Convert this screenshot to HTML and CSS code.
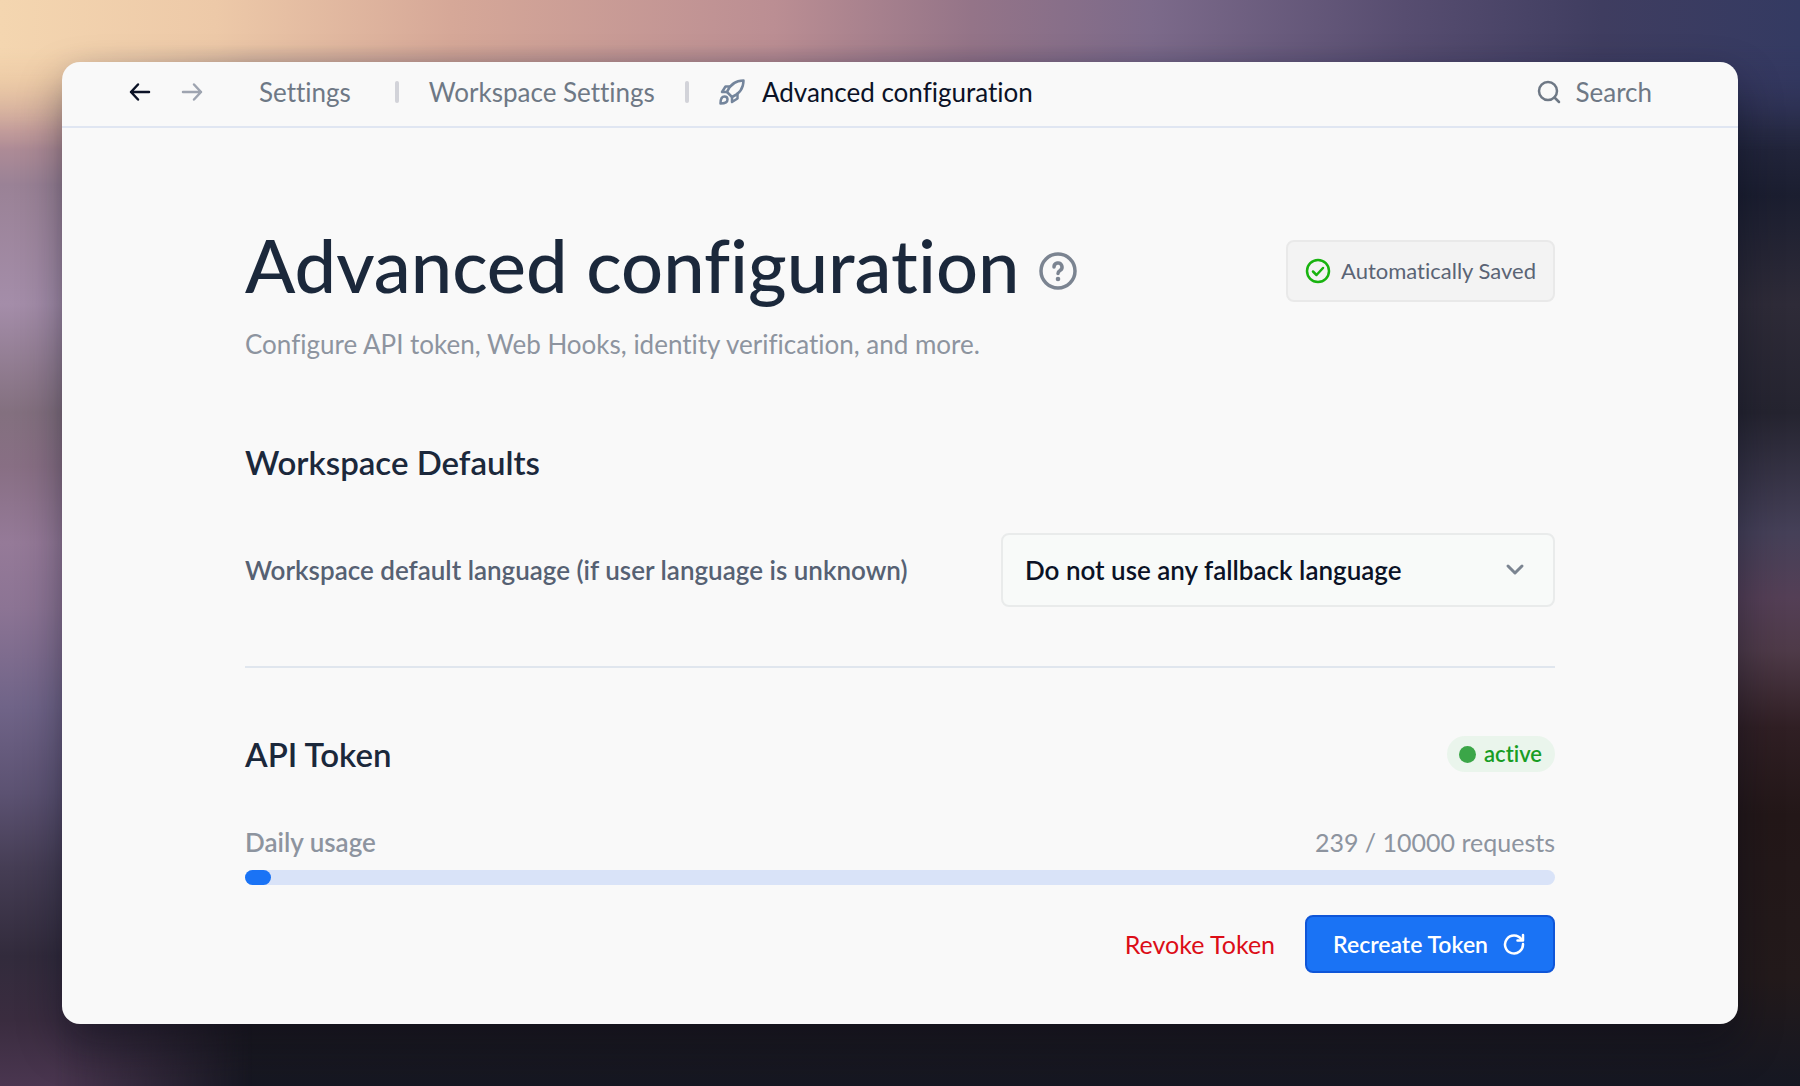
FILE: index.html
```
<!DOCTYPE html>
<html lang="en">
<head>
    <meta charset="UTF-8">
    <meta name="viewport" content="width=device-width, initial-scale=1.0">
    <title>Advanced configuration</title>
    <link rel="stylesheet" href="styles.css">
</head>
<body>
    <div class="window">
        <header class="topbar">
            <div class="history">
                <button type="button" class="icon-button" aria-label="Back">
                    <svg width="22" height="22" viewBox="0 0 22 22"><path d="M20 11H2M9 3.500L2 11l7 7.500"/></svg>
                </button>
                <button type="button" class="icon-button forward" aria-label="Forward">
                    <svg width="22" height="22" viewBox="0 0 22 22"><path d="M2 11h18M13 3.500L20 11l-7 7.500"/></svg>
                </button>
            </div>
            <nav class="breadcrumbs">
                <a href="#" class="crumb-root">Settings</a>
                <span class="divider"></span>
                <a href="#">Workspace Settings</a>
                <span class="divider"></span>
                <a href="#" class="current">
                    <svg width="26" height="26" viewBox="0 0 26 26">
                        <path d="M8 13C11 6 16 1.500 24.500 1.500C24.500 9.500 20 15 13 18Z"/>
                        <path d="M11 7.500H6.500L3 13H8M18.500 14.500V19.500L13 23V18"/>
                        <path d="M1.500 24.500C1.500 20.500 2.500 17.500 5.500 17.500C7.500 17.500 8.500 18.500 8.500 20.500C8.500 23.500 5.500 24.500 1.500 24.500Z"/>
                    </svg>
                    Advanced configuration
                </a>
            </nav>
            <button type="button" class="search">
                <svg width="24" height="24" viewBox="0 0 24 24"><circle cx="11" cy="11" r="9"/><path d="M17.500 17.500L22 22"/></svg>
                Search
            </button>
        </header>

        <main class="content">
            <div class="page-head">
                <div class="title-row">
                    <h1>Advanced configuration</h1>
                    <button type="button" class="icon-button help" aria-label="Help">
                        <svg width="38" height="38" viewBox="0 0 38 38"><circle cx="19" cy="19" r="17"/><path d="M15 15a4 4 0 1 1 6 3.400c-1.500 .9-2 1.600-2 3"/><circle class="dot" cx="19" cy="27" r="2.300"/></svg>
                    </button>
                </div>
                <div class="saved">
                    <svg width="26" height="26" viewBox="0 0 26 26"><circle cx="13" cy="13" r="11"/><path d="M8 13.500l3.500 3.500L18 10"/></svg>
                    Automatically Saved
                </div>
            </div>
            <p class="subtitle">Configure API token, Web Hooks, identity verification, and more.</p>

            <section class="defaults">
                <h2>Workspace Defaults</h2>
                <div class="field">
                    <label for="language">Workspace default language (if user language is unknown)</label>
                    <div class="select-box">
                        <select id="language">
                            <option>Do not use any fallback language</option>
                        </select>
                        <svg width="20" height="14" viewBox="0 0 20 14"><path d="M3 3l7 7 7-7"/></svg>
                    </div>
                </div>
            </section>

            <section class="token">
                <div class="section-head">
                    <h2>API Token</h2>
                    <span class="status">active</span>
                </div>
                <div class="usage">
                    <span class="usage-label" id="usageLabel">Daily usage</span>
                    <span class="usage-count">239 / 10000 requests</span>
                </div>
                <div class="bar" role="progressbar" aria-labelledby="usageLabel" aria-valuenow="239" aria-valuemax="10000">
                    <div class="bar-fill" style="width: 2%;"></div>
                </div>
                <div class="actions">
                    <button type="button" class="revoke">Revoke Token</button>
                    <button type="button" class="recreate">
                        Recreate Token
                        <svg width="22" height="22" viewBox="0 0 22 22"><path d="M18.500 6.500A9 9 0 1 0 20 11"/><path d="M20 2v5.500h-5.500"/></svg>
                    </button>
                </div>
            </section>
        </main>
    </div>
</body>
</html>
```

FILE: styles.css
```
* {
    box-sizing: border-box;
}

body {
    position: relative;
    margin: 0;
    padding: 62px;
    min-height: 100vh;
    font-family: Lato, "Liberation Sans", sans-serif;
    font-size: 26px;
    font-variant-ligatures: none;
    line-height: 32px;
    color: #1b283b;
    background: linear-gradient(to bottom, #343a62 0%, #30325a 7%, #24273f 12%, #1b1e30 18%, #2e2b38 28%, #252430 38%, #454058 49%, #543f56 55%, #4e3a48 60%, #301f24 67%, #231718 75%, #231a1b 90%, #151722 100%);
}

/* wallpaper: left side and top edge, faded into the body gradient */
body::before,
body::after {
    content: "";
    position: absolute;
    top: 0;
    left: 0;
    right: 0;
    z-index: -1;
}

body::before {
    bottom: 0;
    background: linear-gradient(to bottom, #f2d5b0 0%, #e0b896 7%, #b89096 12%, #9a8296 17%, #a48da9 28%, #83707f 38%, #886f84 43%, #957a98 50%, #8c7494 56%, #706488 65%, #5c5272 73%, #453d54 80%, #322b3c 88%, #3a2c3f 94%, #4a3650 100%);
    -webkit-mask-image: linear-gradient(to right, #000 3%, transparent 14%);
    mask-image: linear-gradient(to right, #000 3%, transparent 14%);
}

body::after {
    height: 150px;
    background: linear-gradient(to right, #f4d6b0 0%, #edc9a8 12%, #d6a898 25%, #bb8e93 43%, #947488 54%, #7c6a8a 64%, #574d70 78%, #3f3d60 89%, #343a62 100%);
    -webkit-mask-image: linear-gradient(to bottom, #000 30%, transparent 100%);
    mask-image: linear-gradient(to bottom, #000 30%, transparent 100%);
}

h1, h2, p {
    margin: 0;
}

a {
    color: inherit;
    text-decoration: none;
}

button {
    padding: 0;
    font: inherit;
    color: inherit;
    background: none;
    border: none;
    cursor: pointer;
}

svg {
    display: block;
    flex: none;
    fill: none;
    stroke: currentColor;
    stroke-width: 2.500;
    stroke-linecap: round;
    stroke-linejoin: round;
}

.window {
    min-height: calc(100vh - 124px);
    background-color: #f9f9f9;
    border-radius: 18px;
    box-shadow: 0 20px 44px rgba(6, 10, 24, 0.4);
}

/* top bar */
.topbar {
    display: flex;
    align-items: center;
    height: 66px;
    padding: 0 86px 4px 67px;
    color: #6e7885;
    border-bottom: 2px solid #e0e6f2;
}

.history {
    display: flex;
    gap: 30px;
    margin-right: 56px;
    color: #0b1226;
}

.forward {
    color: #9ea4b0;
}

.breadcrumbs {
    display: flex;
    align-items: center;
    gap: 30px;
    margin-right: auto;
}

.crumb-root {
    margin-right: 14px;
}

.divider {
    width: 4px;
    height: 22px;
    border-radius: 2px;
    background-color: #d2d3d9;
}

.current {
    display: flex;
    align-items: center;
    gap: 17px;
    color: #0b1226;
}

.current svg {
    color: #74859c;
}

.search {
    display: flex;
    align-items: center;
    gap: 14px;
}

/* page */
.content {
    padding: 96px 183px 50px;
}

.page-head,
.field,
.section-head,
.usage {
    display: flex;
    align-items: center;
    justify-content: space-between;
}

.title-row {
    display: flex;
    align-items: center;
    gap: 20px;
}

h1 {
    padding-bottom: 12px;
    font-size: 74px;
    font-weight: 500;
    line-height: 82px;
}

.help {
    color: #7b8491;
}

.help svg {
    stroke-width: 3.500;
}

.dot {
    fill: currentColor;
    stroke: none;
}

.saved {
    display: flex;
    align-items: center;
    gap: 10px;
    height: 62px;
    padding: 0 17px;
    font-size: 22px;
    color: #5a6475;
    background-color: #f3f3f3;
    border: 2px solid #e9e9e9;
    border-radius: 8px;
}

.saved svg {
    color: #18b30f;
}

.subtitle {
    margin-top: 10px;
    color: #8d949f;
}

h2 {
    font-size: 33px;
    font-weight: 600;
    line-height: 40px;
}

.defaults {
    margin-top: 82px;
    padding-bottom: 59px;
    border-bottom: 2px solid #e0e6ee;
}

.field {
    margin-top: 51px;
}

.field label {
    font-weight: 600;
    color: #566173;
}

.select-box {
    position: relative;
    width: 554px;
}

.select-box select {
    width: 100%;
    height: 74px;
    padding: 0 64px 0 22px;
    font: inherit;
    font-weight: 600;
    color: #0b1226;
    background-color: #f8faf9;
    border: 2px solid #e9ebeb;
    border-radius: 8px;
    appearance: none;
}

.select-box svg {
    position: absolute;
    top: 30px;
    right: 30px;
    color: #7b8491;
    stroke-width: 3;
    pointer-events: none;
}

.token {
    margin-top: 66px;
}

.status {
    display: flex;
    align-items: center;
    gap: 8px;
    height: 36px;
    padding: 0 13px 0 12px;
    font-size: 22px;
    font-weight: 600;
    color: #189d24;
    background-color: #eaf5ec;
    border-radius: 18px;
}

.status::before {
    content: "";
    width: 17px;
    height: 17px;
    border-radius: 50%;
    background-color: #3ba648;
}

.usage {
    margin-top: 52px;
    color: #8d949f;
}

.usage-label {
    font-weight: 600;
}

.usage-count {
    font-size: 25px;
}

.bar {
    height: 15px;
    margin-top: 12px;
    background-color: #d9e3f8;
    border-radius: 8px;
}

.bar-fill {
    height: 100%;
    background-color: #1a73f5;
    border-radius: 8px;
}

.actions {
    display: flex;
    align-items: center;
    justify-content: flex-end;
    gap: 30px;
    margin-top: 30px;
}

.revoke {
    font-size: 25px;
    color: #dc0d17;
}

.recreate {
    display: flex;
    align-items: center;
    gap: 15px;
    height: 58px;
    padding: 0 28px 0 26px;
    font-size: 23px;
    font-weight: 600;
    color: #fff;
    background-color: #1a73f5;
    border: 2px solid #0f56d8;
    border-radius: 8px;
}
```
